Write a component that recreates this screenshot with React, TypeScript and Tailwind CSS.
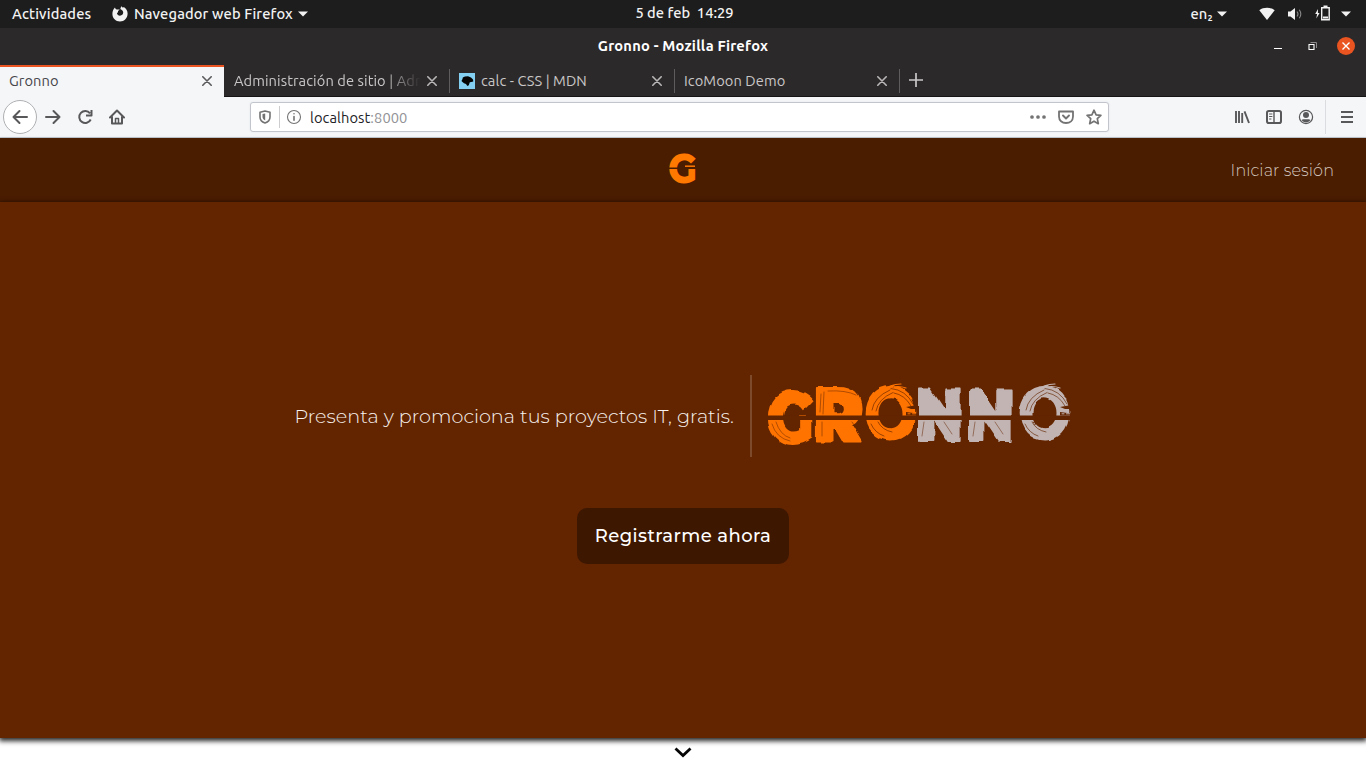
import type { ReactNode } from "react";

const ORANGE = "#ff7300";
const SILVER = "#c2b4b3";

function Caret() {
  return (
    <svg width="10" height="6" viewBox="0 0 10 6" className="shrink-0">
      <path d="M0 0.5h10L5 5.5z" fill="#f2f2f2" />
    </svg>
  );
}

function CloseX({ color }: { color: string }) {
  return (
    <svg width="10" height="10" viewBox="0 0 10 10" fill="none" stroke={color} strokeWidth="1.6" strokeLinecap="round" className="shrink-0">
      <path d="M.8 .8l8.4 8.4M9.2 .8L.8 9.2" />
    </svg>
  );
}

function Icon({ children, className = "" }: { children: ReactNode; className?: string }) {
  return (
    <svg width="16" height="16" viewBox="0 0 16 16" fill="none" stroke="#58585a" strokeWidth="2" strokeLinecap="round" strokeLinejoin="round" className={`shrink-0 ${className}`}>
      {children}
    </svg>
  );
}

function SystemBar() {
  return (
    <header className="grid h-7 grid-cols-3 items-center bg-[#1d1d1d] text-[14.667px] font-medium text-[#f2f2f2]">
      <div className="flex items-center pl-3">
        <span className="w-[100px] whitespace-nowrap tracking-[0.160px]">Actividades</span>
        <svg width="16" height="16" viewBox="0 0 16 16" fill="#f2f2f2" className="mr-1.5 shrink-0">
          <path d="M3 1.600c.2 1 .8 1.600 1.800 2h3l-1.700 1.400-.2 1.600-1 .5c.2 1.600 1.500 2.600 3.100 2.600 1.900 0 3.200-1.300 3.200-3.100 0-1.200-.6-2-1.400-2.600L8.300 3 9.200.2l1.800 1.500.8-.6c2.300 1.300 3.800 3.700 3.800 6.400 0 4.500-3.300 8-7.600 8S.4 12.200.4 8C.4 5.500 1.400 3.100 3 1.600z" />
        </svg>
        <span className="mr-[5px] whitespace-nowrap tracking-[0.140px]">Navegador web Firefox</span>
        <Caret />
      </div>
      <div className="whitespace-pre pb-[2px] pl-[3px] text-center">5 de feb  14:29</div>
      <div className="flex items-center justify-end pr-[15px]">
        <span className="mr-1 tracking-[0.200px]">en₂</span>
        <Caret />
        <svg width="16" height="14" viewBox="0 0 16 14" className="ml-8 mr-3" fill="#f2f2f2">
          <path d="M.3 3.200C4.700 0 11.300 0 15.700 3.200L8 13z" />
        </svg>
        <svg width="16" height="14" viewBox="0 0 16 14" className="mr-3" fill="#f2f2f2">
          <path d="M1 4.500h2.500L8 1v12L3.500 9.500H1z" />
          <path d="M10 4.500q2 2.500 0 5M12.300 2.700q3 4.300 0 8.600" fill="none" stroke="#888" strokeWidth="1.100" />
        </svg>
        <svg width="15" height="16" viewBox="0 0 15 16" className="mb-0.5 mr-[11px]">
          <path d="M3 4L.2 9h1.900L1.300 13.500 4.600 8H2.900z" fill="#f2f2f2" />
          <path d="M6.700 2.700h7.500v12H6.700z" fill="none" stroke="#f2f2f2" strokeWidth="1.400" />
          <path d="M8.500 .5h4V2h-4zM8 11.500h5V13.500H8z" fill="#f2f2f2" />
        </svg>
        <Caret />
      </div>
    </header>
  );
}

function TitleBar() {
  return (
    <div className="grid h-[37px] grid-cols-3 items-center bg-[#2c292a]">
      <div />
      <h1 className="whitespace-nowrap pb-0.5 text-center text-[14.667px] font-bold tracking-[0.210px] text-white">Gronno - Mozilla Firefox</h1>
      <div className="flex items-center justify-end pb-px pr-[10px]">
        <div className="mt-[5px] h-px w-2 bg-white" />
        <svg width="9" height="9" viewBox="0 0 9 9" className="ml-[26px] mr-5" fill="none">
          <path d="M2.500 .5h6V6" stroke="#8c8a8b" />
          <path d="M1 2.500h5v5H1z" stroke="#fff" strokeWidth="1.100" />
        </svg>
        <div className="mr-px flex size-[18px] items-center justify-center rounded-full bg-[#e95420]">
          <svg width="8" height="8" viewBox="0 0 8 8" stroke="#fff" strokeWidth="1.400"><path d="M.5 .5l7 7M7.500 .5l-7 7" /></svg>
        </div>
      </div>
    </div>
  );
}

function Separator() {
  return <div className="h-6 w-px shrink-0 bg-[#5e5c5d]" />;
}

function TabStrip() {
  return (
    <div className="flex h-8 items-center border-b border-[#161415] bg-[#2c292a] text-[14.667px] tracking-[0.080px] text-[#c9c7c7]">
      <div className="flex h-8 w-[224px] shrink-0 items-center justify-between self-start border-t-2 border-[#e95420] bg-[#f5f6f8] pb-[3px] pl-[9px] pr-3 text-[#45454a]">
        <span>Gronno</span>
        <CloseX color="#5a5a5c" />
      </div>
      <div className="flex w-[225px] shrink-0 items-center pl-[10px]">
        <span className="mr-1.5 w-[187px] whitespace-nowrap [mask-image:linear-gradient(to_right,black_150px,transparent_187px)]">
          Administración de sitio | Adr
        </span>
        <CloseX color="#b9b7b7" />
      </div>
      <Separator />
      <div className="flex w-[224px] shrink-0 items-center pl-[9px] pr-3">
        <svg width="16" height="16" viewBox="0 0 16 16" className="mr-1.5">
          <path d="M0 0h16v16H0z" fill="#83d0f2" />
          <path d="M2.500 8l1-2 .3-1.500 2.200-1 3-.3 3 1.300 2 2 .3 2-2 .5-1.500.3-1 3-1.500.7-1.300-2-2-.8-1.500-1.200z" fill="#050505" />
        </svg>
        <span className="flex-1">calc - CSS | MDN</span>
        <CloseX color="#b9b7b7" />
      </div>
      <Separator />
      <div className="flex w-[224px] shrink-0 items-center justify-between pl-[9px] pr-3">
        <span>IcoMoon Demo</span>
        <CloseX color="#b9b7b7" />
      </div>
      <Separator />
      <svg width="14" height="14" viewBox="0 0 14 14" stroke="#c9c7c7" strokeWidth="1.700" className="mb-0.5 ml-[9px]">
        <path d="M7 0v14M0 7h14" />
      </svg>
    </div>
  );
}

function Toolbar() {
  return (
    <div className="flex h-[41px] items-center border-b border-[#c6ccd4] bg-[#f5f6f8] pl-[3px]">
      <div className="flex size-[34px] shrink-0 items-center justify-center rounded-full border border-[#aeb0b3] bg-white">
        <Icon><path d="M15 8H1.500M7.500 2l-6 6 6 6" /></Icon>
      </div>
      <Icon className="ml-2"><path d="M1 8h13.500M8.500 2l6 6-6 6" /></Icon>
      <Icon className="ml-4">
        <path d="M13 4.300A6 6 0 1 0 13.700 10.500M14.500 1v5.500H9" strokeLinecap="butt" />
      </Icon>
      <Icon className="ml-4">
        <path d="M1 8.500L8 1.500l7 7M3 8v6.500h10V8" />
        <path d="M6.500 14V9.500h3V14" strokeWidth="1.500" />
      </Icon>
      <div className="ml-[125px] flex h-[30px] w-[859px] shrink-0 items-center rounded-[3px] border border-[#c2c6cc] bg-white pl-[6px] pr-[6px] shadow-[0_0_2px_#dfe2e6]">
        <Icon>
          <path d="M8 2l5 1.200V8c0 3-2 5-5 6-3-1-5-3-5-6V3.200z" stroke="#737373" strokeWidth="1.600" />
          <path d="M8.200 4.500v7c-2-1-2.700-2.300-2.700-4V5z" fill="#737373" stroke="none" />
        </Icon>
        <div className="ml-[6px] mr-[6px] h-[22px] w-px bg-[#cdcdd0]" />
        <Icon>
          <circle cx="8" cy="8" r="6.500" stroke="#737373" strokeWidth="1.100" />
          <path d="M8 7.500v3.800M8 4.700v.1" stroke="#737373" strokeWidth="1.600" />
        </Icon>
        <div className="ml-2 flex-1 pt-px text-[14.667px] tracking-[0.080px] text-[#222226]">
          localhost<span className="text-[#929296]">:8000</span>
        </div>
        <Icon>
          <path d="M2 8h.01M8 8h.01M14 8h.01" stroke="#737373" strokeWidth="3.700" />
        </Icon>
        <Icon className="ml-3">
          <path d="M1 2.500h14v5c0 4-3 6.500-7 6.500s-7-2.500-7-6.500z" stroke="#737373" strokeWidth="1.800" />
          <path d="M5 6.500l3 3 3-3" stroke="#737373" strokeWidth="1.900" />
        </Icon>
        <Icon className="ml-3">
          <path d="M8 1.200l2.100 4.600 4.800.6-3.600 3.300 1 5L8 12.200l-4.300 2.500 1-5L1.100 6.400l4.800-.6z" stroke="#737373" strokeWidth="1.700" />
        </Icon>
      </div>
      <Icon className="ml-[125px]">
        <path d="M2 2v12M5 2v12M8.200 4v10M10.500 2.300L15 14" strokeWidth="1.900" strokeLinecap="butt" />
      </Icon>
      <Icon className="ml-4">
        <rect x="1" y="2" width="14" height="12" rx="1.800" />
        <path d="M8 2v12" strokeWidth="1.400" />
        <path d="M3.500 5h2.500M3.500 7.500h2.500M3.500 10h1.500" strokeWidth="1" />
      </Icon>
      <Icon className="ml-4">
        <circle cx="8" cy="8" r="6.600" strokeWidth="1.200" />
        <circle cx="8" cy="6" r="3" fill="#58585a" stroke="none" />
        <path d="M3.500 11c1-1 2-.7 3-.7h3c1 0 2-.3 3 .7-2 3.200-7 3.200-9 0z" fill="#58585a" stroke="none" />
      </Icon>
      <div className="ml-[11px] h-[34px] w-px bg-[#dadce0]" />
      <Icon className="ml-[13px]">
        <path d="M2 3h12M2 8h12M2 13h12" strokeLinecap="butt" />
      </Icon>
    </div>
  );
}

type Letter = { ch: string; x: number; sx: number; base: number; sy: number; fill: string; weight: number; edge: number };

const LETTERS: Letter[] = [
  { ch: "G", x: -2, sx: 0.84, base: 60, sy: 1.0, fill: ORANGE, weight: 900, edge: 0 },
  { ch: "R", x: 45, sx: 0.88, base: 58, sy: 1.02, fill: ORANGE, weight: 900, edge: 2 },
  { ch: "O", x: 95.5, sx: 0.84, base: 56, sy: 0.98, fill: ORANGE, weight: 800, edge: 0 },
  { ch: "N", x: 147.5, sx: 0.78, base: 56.5, sy: 0.97, fill: SILVER, weight: 900, edge: 2.2 },
  { ch: "N", x: 198.5, sx: 0.78, base: 56.5, sy: 0.97, fill: SILVER, weight: 900, edge: 2.2 },
  { ch: "O", x: 249.5, sx: 0.84, base: 56, sy: 0.98, fill: SILVER, weight: 800, edge: 0 },
];

function RingStrokes({ x, color }: { x: number; color: string }) {
  return (
    <g transform={`translate(${x} 0)`} fill="none" strokeLinecap="round">
      <path d="M8 18Q15 5 28 1.500M16 7Q24 0 35 0M22 4Q32 1 40 4M30 6Q41 8 46 15" stroke={color} strokeWidth="1.200" />
      <g stroke="#632500" strokeWidth="0.65">
        <path d="M6 26Q8 13 24 6M10 27Q12 15 27 8.500" />
        <path d="M25 4.500Q40 6 47 20M28 9Q39 11 45 22" />
        <path d="M5 40Q9 49 18 52M12 38Q16 46 26 48" />
      </g>
      <path d="M40 23l11-2v4h-6zM40 28l11 1.500v2h-11z" fill="#632500" />
      <path d="M42 27.500h1.500M42 29.800h2M46.500 29.800h3" stroke={color} strokeWidth="1" />
    </g>
  );
}

function Wordmark() {
  return (
    <svg width="304" height="64" viewBox="0 0 304 64" className="shrink-0 overflow-visible" role="img" aria-label="GRONNO">
      <filter id="rough" x="-5%" y="-5%" width="110%" height="110%">
        <feTurbulence type="fractalNoise" baseFrequency="0.1 0.05" numOctaves="1" seed="7" />
        <feDisplacementMap in="SourceGraphic" scale="6" xChannelSelector="R" yChannelSelector="G" />
      </filter>
      <g filter="url(#rough)" fontFamily="Montserrat, Inter, sans-serif" fontSize="76" strokeLinejoin="round">
        {LETTERS.map((l) => (
          <text
            key={l.x}
            transform={`translate(${l.x} ${l.base}) scale(${l.sx} ${l.sy})`}
            fill={l.fill}
            stroke={l.fill}
            strokeWidth={l.edge}
            fontWeight={l.weight}
          >
            {l.ch}
          </text>
        ))}
      </g>
      <g fill="none" stroke="#632500" strokeWidth="0.5" strokeLinecap="round">
        <path d="M4 40q4 14 18 17M8 38q4 13 14 16M53 10l-1 18M56 8l-1 22M60 7q18-1 28 4M54 38v14M84 38l6 9" />
        <path d="M156 38l-2 14M176 38l8 12M207 38l-2 14M227 38l8 12" />
      </g>
      <RingStrokes x={98} color={ORANGE} />
      <RingStrokes x={252} color={SILVER} />
      <path d="M-2 31.500h308v4.500H-2z" fill="#632500" />
    </svg>
  );
}

function Mark() {
  return (
    <svg width="30" height="34" viewBox="0 0 30 34" className="overflow-visible" role="img" aria-label="G">
      <text transform="translate(0 30.500) scale(.9 1)" fontFamily="Montserrat, Inter, sans-serif" fontWeight="800" fontSize="42" fill="#ff7800">
        G
      </text>
      <path d="M-1 15.500h31v1.500H-1z" fill="#4a1c00" />
      <path d="M17 14.200h10" stroke="#ff7800" strokeWidth="1.500" />
    </svg>
  );
}

export default function App() {
  return (
    <div className="flex h-screen w-full flex-col overflow-hidden bg-white font-['Ubuntu','Noto_Sans',sans-serif]">
      <SystemBar />
      <TitleBar />
      <TabStrip />
      <Toolbar />
      <main className="flex min-h-0 flex-1 flex-col font-['Montserrat','Inter',sans-serif]">
        <nav className="z-10 grid h-16 shrink-0 grid-cols-3 items-center bg-[#4a1c00] shadow-[0_1px_3px_rgba(0,0,0,0.35)]">
          <div />
          <div className="flex justify-center pb-[3px]">
            <Mark />
          </div>
          <a className="pr-8 pt-0.5 text-right text-[16px] font-light tracking-[0.1px] text-[#d3c6bf]">Iniciar sesión</a>
        </nav>
        <section className="z-10 flex h-[536px] shrink-0 flex-col items-center bg-[#632500] pt-[173px] shadow-[0_2px_5px_1px_rgba(0,0,0,0.85)]">
          <div className="flex items-center">
            <p className="w-[440px] whitespace-nowrap text-[19.200px] font-light tracking-[0.030px] text-[#f8f3f0]">
              Presenta y promociona tus proyectos IT, gratis.
            </p>
            <div className="ml-[15px] mr-4 h-[82px] w-0.5 bg-[#7d4a2b]" />
            <Wordmark />
          </div>
          <button className="mt-[51px] h-14 w-[212px] rounded-[10px] bg-[#3d1700] text-[18px] font-medium tracking-[0.430px] text-white">
            Registrarme ahora
          </button>
        </section>
        <div className="flex flex-1 items-center justify-center">
          <svg width="18" height="12" viewBox="0 0 18 12" fill="none" stroke="#050505" strokeWidth="2.800" className="mb-[3px]">
            <path d="M1.500 2.500L9 9.500l7.500-7" />
          </svg>
        </div>
      </main>
    </div>
  );
}
